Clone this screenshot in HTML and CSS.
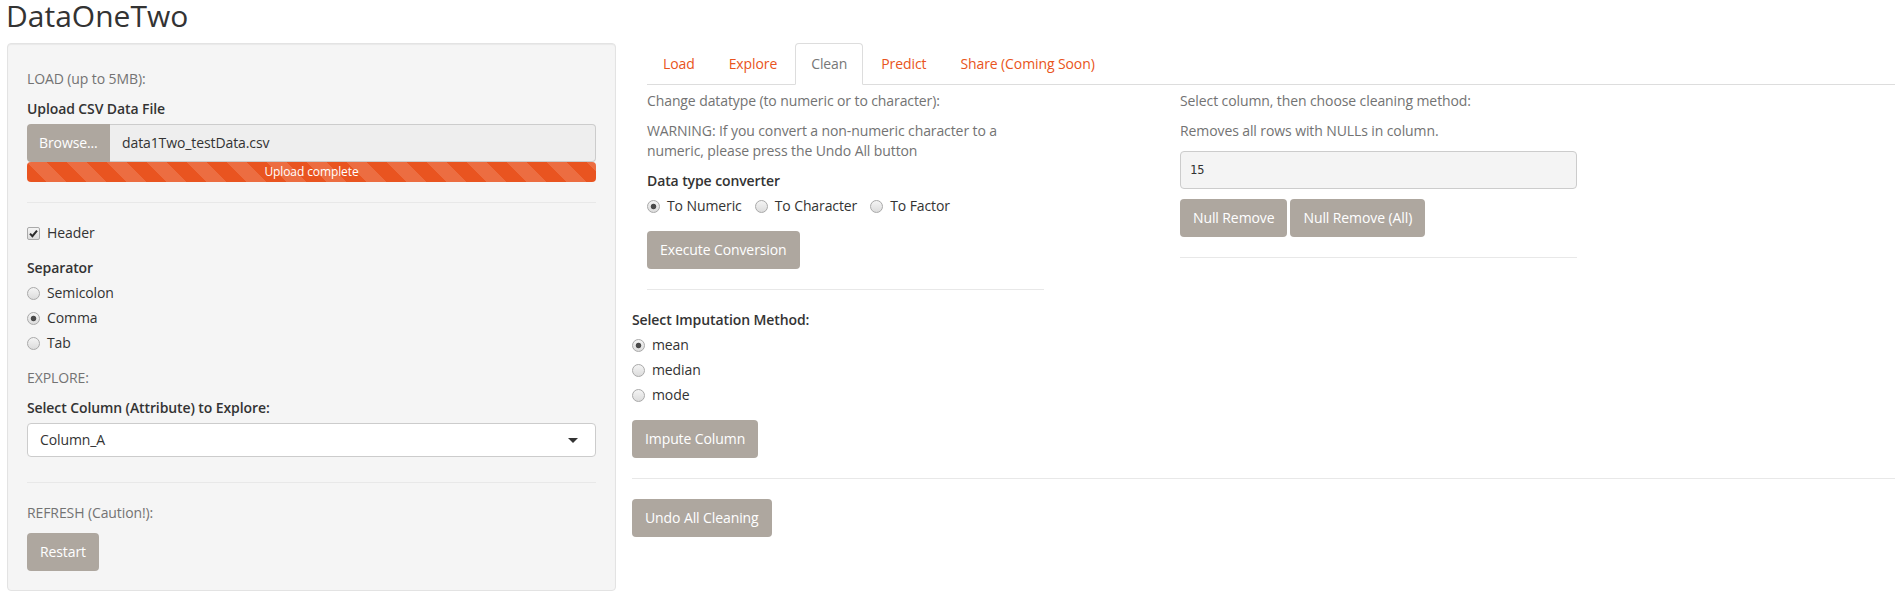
FILE: index.html
```html
<!DOCTYPE html>
<html lang="en">
<head>
<meta charset="utf-8">
<title>DataOneTwo</title>
<link rel="stylesheet" href="styles.css">
</head>
<body>
<div class="page">
  <h2 class="title">DataOneTwo</h2>
  <div class="layout">
    <aside class="well">
      <p class="help">LOAD (up to 5MB):</p>
      <div class="file-group">
        <label class="ctl-label">Upload CSV Data File</label>
        <div class="file-input">
          <span class="browse">Browse...</span>
          <span class="file-name">data1Two_testData.csv</span>
        </div>
        <div class="progress"><div class="bar">Upload complete</div></div>
      </div>
      <hr class="rule">
      <div class="form-group">
        <div class="opt"><span class="cb"><svg viewBox="0 0 13 13" width="13" height="13"><path d="M3 6.6 L5.4 9.2 L10 3.6" fill="none" stroke="#2b2b2b" stroke-width="2"/></svg></span>Header</div>
      </div>
      <div class="form-group">
        <label class="ctl-label">Separator</label>
        <div class="opts">
          <div class="opt"><span class="rb"></span>Semicolon</div>
          <div class="opt"><span class="rb on"></span>Comma</div>
          <div class="opt"><span class="rb"></span>Tab</div>
        </div>
      </div>
      <p class="help">EXPLORE:</p>
      <div class="form-group select-group">
        <label class="ctl-label">Select Column (Attribute) to Explore:</label>
        <div class="select"><span>Column_A</span><span class="caret"></span></div>
      </div>
      <hr class="rule">
      <p class="help">REFRESH (Caution!):</p>
      <button class="btn">Restart</button>
    </aside>

    <main class="main">
      <ul class="tabs">
        <li><a href="#">Load</a></li>
        <li><a href="#">Explore</a></li>
        <li class="active"><a href="#">Clean</a></li>
        <li><a href="#">Predict</a></li>
        <li><a href="#">Share (Coming Soon)</a></li>
      </ul>
      <div class="tab-content">
        <div class="clean-row">
          <div class="col">
            <p class="help">Change datatype (to numeric or to character):</p>
            <p class="help">WARNING: If you convert a non-numeric character to a numeric, please press the Undo All button</p>
            <div class="form-group">
              <label class="ctl-label">Data type converter</label>
              <div class="inline-opts">
                <div class="opt"><span class="rb on"></span>To Numeric</div>
                <div class="opt"><span class="rb"></span>To Character</div>
                <div class="opt"><span class="rb"></span>To Factor</div>
              </div>
            </div>
            <button class="btn">Execute Conversion</button>
            <hr class="rule">
          </div>
          <div class="col col-b">
            <p class="help">Select column, then choose cleaning method:</p>
            <p class="help">Removes all rows with NULLs in column.</p>
            <pre class="pre">15</pre>
            <div class="btn-row">
              <button class="btn">Null Remove</button>
              <button class="btn">Null Remove (All)</button>
            </div>
            <hr class="rule">
          </div>
        </div>
        <div class="form-group">
          <label class="ctl-label">Select Imputation Method:</label>
          <div class="opts">
            <div class="opt"><span class="rb on"></span>mean</div>
            <div class="opt"><span class="rb"></span>median</div>
            <div class="opt"><span class="rb"></span>mode</div>
          </div>
        </div>
        <button class="btn">Impute Column</button>
        <hr class="rule">
        <button class="btn">Undo All Cleaning</button>
      </div>
    </main>
  </div>
</div>
</body>
</html>
```

FILE: styles.css
```css
html, body {
  margin: 0;
  padding: 0;
  background: #fff;
}
body {
  font-family: "Open Sans", "Liberation Sans", sans-serif;
  font-size: 14px;
  line-height: 20px;
  letter-spacing: -0.1px;
  color: #333;
}
.page {
  padding: 0 2px 0 7px;
}
.title {
  font-size: 30px;
  font-weight: 400;
  line-height: 32px;
  letter-spacing: 0;
  margin: 0 0 11px -1px;
  color: #333;
}
.layout {
  display: flex;
  align-items: flex-start;
}
.well {
  flex: none;
  width: 609px;
  box-sizing: border-box;
  padding: 19px;
  background: #f5f5f5;
  border: 1px solid #e3e3e3;
  border-radius: 4px;
  box-shadow: inset 0 1px 1px rgba(0,0,0,.05);
}
.help {
  margin: 6px 0 10px;
  color: #737373;
}
.ctl-label {
  display: block;
  font-weight: 600;
  margin-bottom: 5px;
}
.form-group {
  margin-bottom: 15px;
}
.select-group {
  margin-bottom: 25px;
}
.file-input {
  display: flex;
  height: 38px;
}
.browse {
  flex: none;
  width: 83px;
  box-sizing: border-box;
  padding: 9px 12px;
  background: #aea79f;
  color: #fff;
  border-radius: 4px 0 0 4px;
}
.file-name {
  flex: 1;
  box-sizing: border-box;
  padding: 0 12px;
  line-height: 36px;
  background: #eeeeee;
  border: 1px solid #ccc;
  border-left: none;
  border-radius: 0 4px 4px 0;
}
.progress {
  height: 20px;
  border-radius: 4px;
  overflow: hidden;
  background: #f5f5f5;
}
.bar {
  height: 20px;
  line-height: 20px;
  font-size: 12px;
  color: #fff;
  text-align: center;
  background-color: #e95420;
  background-image: linear-gradient(45deg, rgba(255,255,255,.15) 25%, transparent 25%, transparent 50%, rgba(255,255,255,.15) 50%, rgba(255,255,255,.15) 75%, transparent 75%, transparent);
  background-size: 40px 40px;
}
.rule {
  border: 0;
  border-top: 1px solid #e8e8e8;
  margin: 20px 0;
}
.opts .opt + .opt {
  margin-top: 5px;
}
.opt {
  display: flex;
  align-items: center;
  height: 20px;
}
.rb {
  flex: none;
  width: 13px;
  height: 13px;
  box-sizing: border-box;
  margin-right: 7px;
  border-radius: 50%;
  border: 1px solid #a9a9a9;
  background: linear-gradient(#f4f4f4, #dcdcdc);
}
.rb.on {
  background: radial-gradient(circle, #4a4a4a 0, #4a4a4a 2.3px, rgba(74,74,74,0) 3.2px), linear-gradient(#f4f4f4, #dcdcdc);
}
.cb {
  flex: none;
  width: 13px;
  height: 13px;
  box-sizing: border-box;
  margin-right: 7px;
  border: 1px solid #a9a9a9;
  border-radius: 2px;
  background: linear-gradient(#f4f4f4, #dcdcdc);
  display: flex;
  align-items: center;
  justify-content: center;
  overflow: hidden;
}
.cb svg {
  flex: none;
  display: block;
}
.inline-opts {
  display: flex;
}
.inline-opts .opt + .opt {
  margin-left: 13px;
}
.select {
  display: flex;
  align-items: center;
  justify-content: space-between;
  height: 34px;
  box-sizing: border-box;
  padding: 0 17px 0 12px;
  background: #fff;
  border: 1px solid #ccc;
  border-radius: 4px;
}
.caret {
  width: 0;
  height: 0;
  border-left: 5px solid transparent;
  border-right: 5px solid transparent;
  border-top: 5px solid #333;
}
.btn {
  display: inline-block;
  font: inherit;
  letter-spacing: inherit;
  line-height: 20px;
  padding: 8px 12px;
  margin: 0;
  border: 1px solid transparent;
  border-radius: 4px;
  background: #aea79f;
  color: #fff;
  cursor: pointer;
}
.main {
  flex: 1;
  margin-left: 16px;
  margin-right: 2px;
}
.tabs {
  display: flex;
  list-style: none;
  margin: 0 0 0 15px;
  padding: 0;
  border-bottom: 1px solid #ddd;
}
.tabs li {
  margin-bottom: -1px;
  margin-right: 2px;
}
.tabs a {
  display: block;
  padding: 10px 15px;
  line-height: 20px;
  border: 1px solid transparent;
  border-radius: 4px 4px 0 0;
  color: #e95420;
  text-decoration: none;
}
.tabs .active a {
  color: #777;
  background: #fff;
  border-color: #ddd #ddd transparent;
}
.clean-row {
  display: flex;
  padding-left: 15px;
}
.col {
  flex: none;
  width: 397px;
}
.col-b {
  margin-left: 136px;
}
.pre {
  margin: 0 0 10px;
  padding: 9px;
  height: 18px;
  font-family: "DejaVu Sans Mono", "Liberation Mono", monospace;
  font-size: 12px;
  line-height: 18px;
  letter-spacing: 0;
  color: #333;
  background: #f4f4f4;
  border: 1px solid #ccc;
  border-radius: 4px;
}
.btn-row {
  display: flex;
  gap: 3px;
}
```
